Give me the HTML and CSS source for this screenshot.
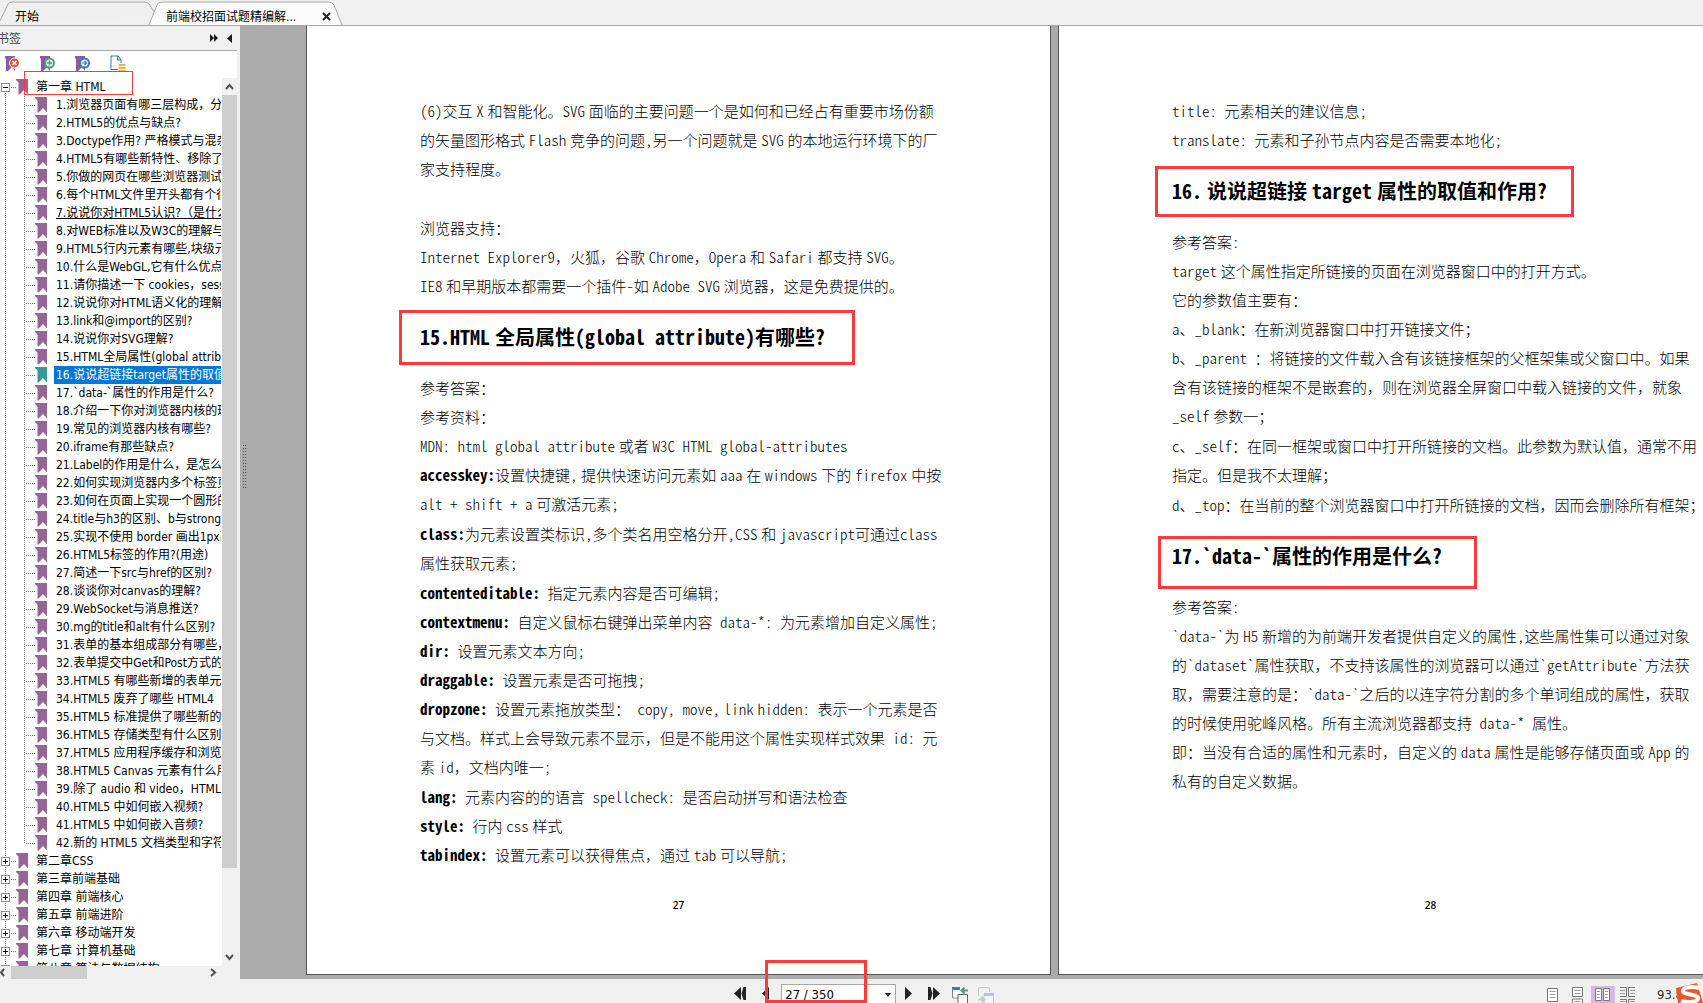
FILE: index.html
```html
<!DOCTYPE html>
<html lang="zh-CN">
<head>
<meta charset="utf-8">
<title>前端校招面试题精编解析</title>
<link rel="stylesheet" href="styles.css">
</head>
<body>
<svg class="defs" aria-hidden="true">
  <symbol id="flag" viewBox="0 0 12 16"><path d="M0 0h12v15.500l-4-4.500-4.500 4.500h-1V3.500L0 1z"/></symbol>
  <symbol id="ribbon" viewBox="0 0 16 17"><path d="M0 1h10v15l-3-4-4 4H1V4L0 3z" fill="#8a5aa8"/></symbol>
</svg>
<div class="app">
  <header class="tabs">
    <button class="tab tab-start">
      <svg class="tab-shape" viewBox="0 0 156 24"><path d="M-2 24 8 3q1-2 4-2h132q3 0 5 2l8 12" fill="#efefef" stroke="#a6a6a6"/></svg>
      <span>开始</span>
    </button>
    <button class="tab tab-file">
      <svg class="tab-shape" viewBox="0 0 194 24"><path d="M0 24 8 4q1-3 5-3h167q3 0 5 3l8 20" fill="#fcfcfc" stroke="#a6a6a6"/></svg>
      <span>前端校招面试题精编解...</span>
      <svg class="close" viewBox="0 0 9 9"><path d="M1 1l7 7M8 1 1 8" stroke="#222" stroke-width="2"/></svg>
    </button>
  </header>

  <div class="main">
    <aside class="panel">
      <div class="panel-head">
        <span>书签</span>
        <svg width="24" height="10" viewBox="0 0 24 10"><path d="M0 0l4 4-4 4zM4 0l4 4-4 4zM22 0v9l-5-4.500z" fill="#1c1c1c"/></svg>
      </div>
      <div class="tools">
        <button aria-label="删除书签"><svg viewBox="0 0 16 17"><use href="#ribbon"/><circle cx="9.500" cy="8" r="5" fill="#d9573a" stroke="#fff"/><path d="M7.500 6l4 4M11.500 6l-4 4" stroke="#fff" stroke-width="1.500"/></svg></button>
        <button aria-label="添加书签"><svg viewBox="0 0 16 17"><use href="#ribbon"/><circle cx="9.500" cy="8" r="4.500" fill="#e7f4ec" stroke="#579a7e" stroke-width="2"/><path d="M9.500 5.500v5M7 8h5" stroke="#579a7e" stroke-width="1.500"/></svg></button>
        <button aria-label="转到书签"><svg viewBox="0 0 16 17"><use href="#ribbon"/><circle cx="9.500" cy="8" r="4.500" fill="#e9f1fa" stroke="#4276ad" stroke-width="2"/><path d="M7 8h4.500M9.500 6l2 2-2 2" fill="none" stroke="#4276ad" stroke-width="1.200"/></svg></button>
        <button aria-label="书签选项"><svg viewBox="0 0 16 17"><path d="M8 14.500H1V1h7l3 4v3M7.500 1v4H11" fill="none" stroke="#4276ad"/><path d="M8.500 10h7M8.500 13h7M8.500 16h7" stroke="#eab04c" stroke-width="2"/></svg></button>
      </div>
      <div class="tree-wrap">
        <ul class="tree">
          <li><a class="chapter" href="#"><i class="fold open"></i><svg class="flag"><use href="#flag"/></svg><span>第一章 HTML</span></a>
            <ul class="items">
              <li><a href="#"><svg class="flag"><use href="#flag"/></svg><span>1.浏览器页面有哪三层构成，分别是什么</span></a></li>
              <li><a href="#"><svg class="flag"><use href="#flag"/></svg><span>2.HTML5的优点与缺点?</span></a></li>
              <li><a href="#"><svg class="flag"><use href="#flag"/></svg><span>3.Doctype作用? 严格模式与混杂模式</span></a></li>
              <li><a href="#"><svg class="flag"><use href="#flag"/></svg><span>4.HTML5有哪些新特性、移除了哪些</span></a></li>
              <li><a href="#"><svg class="flag"><use href="#flag"/></svg><span>5.你做的网页在哪些浏览器测试过</span></a></li>
              <li><a href="#"><svg class="flag"><use href="#flag"/></svg><span>6.每个HTML文件里开头都有个很重要</span></a></li>
              <li><a href="#"><svg class="flag"><use href="#flag"/></svg><span class="visited">7.说说你对HTML5认识?（是什么</span></a></li>
              <li><a href="#"><svg class="flag"><use href="#flag"/></svg><span>8.对WEB标准以及W3C的理解与认识</span></a></li>
              <li><a href="#"><svg class="flag"><use href="#flag"/></svg><span>9.HTML5行内元素有哪些,块级元素</span></a></li>
              <li><a href="#"><svg class="flag"><use href="#flag"/></svg><span>10.什么是WebGL,它有什么优点?</span></a></li>
              <li><a href="#"><svg class="flag"><use href="#flag"/></svg><span>11.请你描述一下 cookies，sessionStorage</span></a></li>
              <li><a href="#"><svg class="flag"><use href="#flag"/></svg><span>12.说说你对HTML语义化的理解?</span></a></li>
              <li><a href="#"><svg class="flag"><use href="#flag"/></svg><span>13.link和@import的区别?</span></a></li>
              <li><a href="#"><svg class="flag"><use href="#flag"/></svg><span>14.说说你对SVG理解?</span></a></li>
              <li><a href="#"><svg class="flag"><use href="#flag"/></svg><span>15.HTML全局属性(global attribute)</span></a></li>
              <li><a class="current" href="#"><svg class="flag"><use href="#flag"/></svg><span>16.说说超链接target属性的取值和作用</span></a></li>
              <li><a href="#"><svg class="flag"><use href="#flag"/></svg><span>17.`data-`属性的作用是什么?</span></a></li>
              <li><a href="#"><svg class="flag"><use href="#flag"/></svg><span>18.介绍一下你对浏览器内核的理解</span></a></li>
              <li><a href="#"><svg class="flag"><use href="#flag"/></svg><span>19.常见的浏览器内核有哪些?</span></a></li>
              <li><a href="#"><svg class="flag"><use href="#flag"/></svg><span>20.iframe有那些缺点?</span></a></li>
              <li><a href="#"><svg class="flag"><use href="#flag"/></svg><span>21.Label的作用是什么，是怎么用的</span></a></li>
              <li><a href="#"><svg class="flag"><use href="#flag"/></svg><span>22.如何实现浏览器内多个标签页</span></a></li>
              <li><a href="#"><svg class="flag"><use href="#flag"/></svg><span>23.如何在页面上实现一个圆形的</span></a></li>
              <li><a href="#"><svg class="flag"><use href="#flag"/></svg><span>24.title与h3的区别、b与strong的区别</span></a></li>
              <li><a href="#"><svg class="flag"><use href="#flag"/></svg><span>25.实现不使用 border 画出1px高的线</span></a></li>
              <li><a href="#"><svg class="flag"><use href="#flag"/></svg><span>26.HTML5标签的作用?(用途)</span></a></li>
              <li><a href="#"><svg class="flag"><use href="#flag"/></svg><span>27.简述一下src与href的区别?</span></a></li>
              <li><a href="#"><svg class="flag"><use href="#flag"/></svg><span>28.谈谈你对canvas的理解?</span></a></li>
              <li><a href="#"><svg class="flag"><use href="#flag"/></svg><span>29.WebSocket与消息推送?</span></a></li>
              <li><a href="#"><svg class="flag"><use href="#flag"/></svg><span>30.mg的title和alt有什么区别?</span></a></li>
              <li><a href="#"><svg class="flag"><use href="#flag"/></svg><span>31.表单的基本组成部分有哪些，</span></a></li>
              <li><a href="#"><svg class="flag"><use href="#flag"/></svg><span>32.表单提交中Get和Post方式的区别</span></a></li>
              <li><a href="#"><svg class="flag"><use href="#flag"/></svg><span>33.HTML5 有哪些新增的表单元素</span></a></li>
              <li><a href="#"><svg class="flag"><use href="#flag"/></svg><span>34.HTML5 废弃了哪些 HTML4</span></a></li>
              <li><a href="#"><svg class="flag"><use href="#flag"/></svg><span>35.HTML5 标准提供了哪些新的</span></a></li>
              <li><a href="#"><svg class="flag"><use href="#flag"/></svg><span>36.HTML5 存储类型有什么区别?</span></a></li>
              <li><a href="#"><svg class="flag"><use href="#flag"/></svg><span>37.HTML5 应用程序缓存和浏览器</span></a></li>
              <li><a href="#"><svg class="flag"><use href="#flag"/></svg><span>38.HTML5 Canvas 元素有什么用</span></a></li>
              <li><a href="#"><svg class="flag"><use href="#flag"/></svg><span>39.除了 audio 和 video，HTML5</span></a></li>
              <li><a href="#"><svg class="flag"><use href="#flag"/></svg><span>40.HTML5 中如何嵌入视频?</span></a></li>
              <li><a href="#"><svg class="flag"><use href="#flag"/></svg><span>41.HTML5 中如何嵌入音频?</span></a></li>
              <li><a href="#"><svg class="flag"><use href="#flag"/></svg><span>42.新的 HTML5 文档类型和字符集</span></a></li>
            </ul>
          </li>
          <li><a class="chapter" href="#"><i class="fold"></i><svg class="flag"><use href="#flag"/></svg><span>第二章CSS</span></a></li>
          <li><a class="chapter" href="#"><i class="fold"></i><svg class="flag"><use href="#flag"/></svg><span>第三章前端基础</span></a></li>
          <li><a class="chapter" href="#"><i class="fold"></i><svg class="flag"><use href="#flag"/></svg><span>第四章 前端核心</span></a></li>
          <li><a class="chapter" href="#"><i class="fold"></i><svg class="flag"><use href="#flag"/></svg><span>第五章 前端进阶</span></a></li>
          <li><a class="chapter" href="#"><i class="fold"></i><svg class="flag"><use href="#flag"/></svg><span>第六章 移动端开发</span></a></li>
          <li><a class="chapter" href="#"><i class="fold"></i><svg class="flag"><use href="#flag"/></svg><span>第七章 计算机基础</span></a></li>
          <li><a class="chapter" href="#"><i class="fold"></i><svg class="flag"><use href="#flag"/></svg><span>第八章 算法与数据结构</span></a></li>
        </ul>
        <div class="vbar">
          <svg viewBox="0 0 15 17"><path d="M4 11l3.500-4L11 11" fill="none" stroke="#505050" stroke-width="2"/></svg>
          <div class="vthumb"></div>
          <svg viewBox="0 0 15 17"><path d="M4 6l3.500 4L11 6" fill="none" stroke="#505050" stroke-width="2"/></svg>
        </div>
        <span class="mark mark-chapter"></span>
      </div>
      <div class="hbar">
        <svg viewBox="0 0 11 13"><path d="M4 3 1 6.500 4 10" fill="none" stroke="#505050" stroke-width="2"/></svg>
        <div class="hthumb"></div>
        <svg viewBox="0 0 11 13"><path d="M4 3l4 3.500L4 10" fill="none" stroke="#505050" stroke-width="2"/></svg>
      </div>
    </aside>

    <main class="viewer">
      <div class="splitter"><i class="grip"></i></div>
      <article class="sheet">
        <p class="long">(6)交互&emsp14;X&emsp14;和智能化。SVG&emsp14;面临的主要问题一个是如何和已经占有重要市场份额<br>的矢量图形格式&emsp14;Flash&emsp14;竞争的问题,另一个问题就是&emsp14;SVG&emsp14;的本地运行环境下的厂<br>家支持程度。</p>
        <p><br></p>
        <p>浏览器支持：</p>
        <p>Internet Explorer9<i>，</i>火狐<i>，</i>谷歌&emsp14;Chrome<i>，</i>Opera&emsp14;和&emsp14;Safari&emsp14;都支持&emsp14;SVG。</p>
        <p>IE8&emsp14;和早期版本都需要一个插件-如&emsp14;Adobe SVG&emsp14;浏览器<i>，</i>这是免费提供的。</p>
        <h2>15.HTML&emsp14;全局属性(global attribute)有哪些?<span class="mark mark-15"></span></h2>
        <p>参考答案：</p>
        <p>参考资料：</p>
        <p>MDN: html global attribute&emsp14;或者&emsp14;W3C HTML global-attributes</p>
        <p class="long"><b>accesskey:</b>设置快捷键,&emsp14;提供快速访问元素如&emsp14;aaa&emsp14;在&emsp14;windows&emsp14;下的&emsp14;firefox&emsp14;中按<br>alt + shift + a&emsp14;可激活元素;</p>
        <p class="long"><b>class:</b>为元素设置类标识,多个类名用空格分开,CSS&emsp14;和&emsp14;javascript可通过class<br>属性获取元素;</p>
        <p><b>contenteditable:</b> 指定元素内容是否可编辑;</p>
        <p><b>contextmenu:</b> 自定义鼠标右键弹出菜单内容 data-*: 为元素增加自定义属性;</p>
        <p><b>dir:</b> 设置元素文本方向;</p>
        <p><b>draggable:</b> 设置元素是否可拖拽;</p>
        <p class="long"><b>dropzone:</b> 设置元素拖放类型： copy, move,&emsp14;link&emsp14;hidden: 表示一个元素是否<br>与文档。样式上会导致元素不显示<i>，</i>但是不能用这个属性实现样式效果 id: 元<br>素&emsp14;id<i>，</i>文档内唯一;</p>
        <p><b>lang:</b> 元素内容的的语言 spellcheck: 是否启动拼写和语法检查</p>
        <p><b>style:</b> 行内&emsp14;css&emsp14;样式</p>
        <p><b>tabindex:</b> 设置元素可以获得焦点<i>，</i>通过&emsp14;tab&emsp14;可以导航;</p>
        <footer>27</footer>
      </article>
      <article class="sheet">
        <p>title: 元素相关的建议信息;</p>
        <p>translate: 元素和子孙节点内容是否需要本地化;</p>
        <h2>16.&emsp14;说说超链接&emsp14;target&emsp14;属性的取值和作用?<span class="mark mark-16"></span></h2>
        <p>参考答案:</p>
        <p>target&emsp14;这个属性指定所链接的页面在浏览器窗口中的打开方式。</p>
        <p>它的参数值主要有：</p>
        <p>a、_blank：在新浏览器窗口中打开链接文件；</p>
        <p class="long">b、_parent ：将链接的文件载入含有该链接框架的父框架集或父窗口中。如果<br>含有该链接的框架不是嵌套的<i>，</i>则在浏览器全屏窗口中载入链接的文件<i>，</i>就象<br>_self&emsp14;参数一；</p>
        <p class="long">c、_self：在同一框架或窗口中打开所链接的文档。此参数为默认值<i>，</i>通常不用<br>指定。但是我不太理解；</p>
        <p>d、_top：在当前的整个浏览器窗口中打开所链接的文档<i>，</i>因而会删除所有框架；</p>
        <h2>17.`data-`属性的作用是什么?<span class="mark mark-17"></span></h2>
        <p>参考答案:</p>
        <p>`data-`为&emsp14;H5&emsp14;新增的为前端开发者提供自定义的属性,这些属性集可以通过对象<br>的`dataset`属性获取<i>，</i>不支持该属性的浏览器可以通过`getAttribute`方法获<br>取<i>，</i>需要注意的是：`data-`之后的以连字符分割的多个单词组成的属性<i>，</i>获取<br>的时候使用驼峰风格。所有主流浏览器都支持 data-* 属性。</p>
        <p>即：当没有合适的属性和元素时<i>，</i>自定义的&emsp14;data&emsp14;属性是能够存储页面或&emsp14;App&emsp14;的<br>私有的自定义数据。</p>
        <footer>28</footer>
      </article>
    </main>
  </div>

  <footer class="status">
    <div class="pager">
      <button aria-label="首页"><svg width="13" height="13" viewBox="0 0 13 13"><path d="M7 0v13L0 6.500zM12 0v13h-2.500L7.500 6.500 9.500 0z" fill="#222"/></svg></button>
      <button aria-label="上一页"><svg width="8" height="13" viewBox="0 0 8 13"><path d="M7 0v13L0 6.500z" fill="#222"/></svg></button>
      <div class="page-box"><input type="text" value="27 / 350" aria-label="页码"><svg width="6" height="4" viewBox="0 0 6 4"><path d="M0 0h6L3 4z" fill="#222"/></svg><span class="mark mark-page"></span></div>
      <button aria-label="下一页"><svg width="8" height="13" viewBox="0 0 8 13"><path d="M0 0v13l7-6.500z" fill="#222"/></svg></button>
      <button aria-label="末页"><svg width="13" height="13" viewBox="0 0 13 13"><path d="M5 0v13l7-6.500zM0 0v13h2.500L4.500 6.500 2.500 0z" fill="#222"/></svg></button>
      <div class="history">
        <button aria-label="上一视图"><svg width="17" height="17" viewBox="0 0 17 17"><path d="M6 11H.500V.500H8" fill="#fff" stroke="#888"/><path d="M0 1.500h8" stroke="#4276ad" stroke-width="3"/><path d="M6 7.500h9.500v9H6z" fill="#fff" stroke="#666"/><path d="M16 3.500h-6M12.500.500l-3 3 3 3" fill="none" stroke="#579a7e" stroke-width="2"/></svg></button>
        <button aria-label="下一视图"><svg width="17" height="17" viewBox="0 0 17 17"><path d="M.500 9V.500h11V5" fill="none" stroke="#c8c8c8"/><path d="M6 7.500h9.500v9H6z" fill="#f6f6f6" stroke="#c4c4c4"/><path d="M6 7.500h10" stroke="#b0c4dc" stroke-width="3"/><path d="M0 12.500h6M3.500 10l3 2.500-3 2.500" fill="none" stroke="#b3d3c4" stroke-width="2"/></svg></button>
      </div>
    </div>
    <div class="views">
      <button aria-label="单页"><svg width="16" height="17" viewBox="0 0 16 17"><path d="M2.500 2.500h10v13h-10z" fill="#fff" stroke="#777"/><path d="M4.500 5.500h6M4.500 8.500h6M4.500 11.500h6" stroke="#999"/></svg></button>
      <button aria-label="连续"><svg width="16" height="17" viewBox="0 0 16 17"><path d="M2.500 1.500h10v9h-10zM2.500 18v-5h10v5" fill="#fff" stroke="#777"/><path d="M4.500 4.500h6M4.500 7.500h6M4.500 15.500h6" stroke="#999"/></svg></button>
      <button class="on" aria-label="双页"><svg width="16" height="17" viewBox="0 0 16 17"><path d="M.500 2.500h6v12h-6zM8.500 2.500h6v12h-6z" fill="#fff" stroke="#777"/><path d="M2 5.500h3M2 8.500h3M2 11.500h3M10 5.500h3M10 8.500h3M10 11.500h3" stroke="#999"/></svg></button>
      <button aria-label="双页连续"><svg width="16" height="17" viewBox="0 0 16 17"><path d="M0 1.500h6.500v9H0M15 1.500H8.500v9H15M0 13.500h6.500V18M15 13.500H8.500V18" fill="none" stroke="#777"/><path d="M0 4.500h5M0 7.500h5M10 4.500h5M10 7.500h5M0 15.500h5M10 15.500h5" stroke="#999"/></svg></button>
      <span class="zoom">93.8</span>
      <svg class="ime" viewBox="0 0 28 20"><path d="M1 5 22 0l6 20H3z" fill="#f0562a"/><path d="M24 5C18 3 8 4 8 8s15 3 15 7-9 5-17 3" fill="none" stroke="#fff" stroke-width="4"/></svg>
    </div>
  </footer>
</div>
</body>
</html>
```
FILE: styles.css
```css
* { box-sizing: border-box; }

body {
  margin: 0;
  background: #f0f0f0;
  color: #000;
  font: 12px/18px "DejaVu Sans Condensed", "Noto Sans CJK SC", sans-serif;
}

button {
  margin: 0;
  padding: 0;
  border: 0;
  background: none;
  color: inherit;
  font: inherit;
}

svg { display: block; flex: none; }
.defs { position: absolute; width: 0; height: 0; }
ul { margin: 0; padding: 0; list-style: none; }

.app {
  display: flex;
  flex-direction: column;
  height: 100vh;
  overflow: hidden;
}

/* Document tabs */
.tabs {
  display: flex;
  flex: none;
  height: 26px;
  padding-top: 1px;
  border-bottom: 1px solid #a6a6a6;
}

.tab {
  position: relative;
  display: flex;
  align-items: center;
  height: 24px;
  padding-top: 7px;
}

.tab-shape {
  position: absolute;
  top: 0;
  left: 0;
  height: 24px;
  overflow: visible;
}

.tab span { position: relative; }
.tab-start { width: 149px; padding-left: 15px; }
.tab-start .tab-shape { width: 156px; }
.tab-file { width: 194px; padding-left: 17px; }
.tab-file .tab-shape { width: 194px; }

.close {
  position: relative;
  width: 9px;
  height: 9px;
  margin-left: auto;
  margin-right: 12px;
}

.main {
  display: flex;
  flex: 1;
  min-height: 0;
}

/* Bookmark panel */
.panel {
  display: flex;
  flex-direction: column;
  flex: none;
  width: 240px;
  padding-right: 3px;
  background: linear-gradient(#f0f0f0, #f0f0f0) right / 3px 100% no-repeat #fff;
}

.panel-head {
  display: flex;
  flex: none;
  align-items: center;
  justify-content: space-between;
  height: 25px;
  padding: 1px 3px 0 0;
  border-bottom: 1px solid #a6a6a6;
  background: #f0f0f0;
  color: #444;
}

.panel-head span { margin-left: -3px; }

.tools {
  display: flex;
  flex: none;
  align-items: flex-start;
  gap: 19px;
  height: 27px;
  padding: 4px 0 0 5px;
}

.tools svg { width: 16px; height: 17px; }

.tree-wrap {
  position: relative;
  display: flex;
  flex: 1;
  min-height: 0;
}

.tree {
  flex: 1;
  min-width: 0;
  overflow: hidden;
  background: repeating-linear-gradient(#777 0 1px, transparent 1px 2px) 5px 9px / 1px 100% no-repeat;
}

.tree a {
  display: flex;
  height: 18px;
  color: #000;
  text-decoration: none;
  white-space: nowrap;
}

.tree span { line-height: 19px; }

.items { background: repeating-linear-gradient(#777 0 1px, transparent 1px 2px) 24px 0 / 1px 747px no-repeat; }

.items a {
  padding-left: 35px;
  background: repeating-linear-gradient(90deg, #777 0 1px, transparent 1px 2px) 26px 9px / 9px 1px no-repeat;
}

.items span { margin-left: 7px; padding-left: 2px; }

.flag {
  width: 12px;
  height: 16px;
  margin-top: 1px;
  fill: #966496;
}

.current .flag { fill: #339999; }
.items .current span { flex: 1; background: #0078d7; color: #fff; }
.visited { text-decoration: underline; }

.chapter {
  padding-left: 1px;
  background: repeating-linear-gradient(90deg, #777 0 1px, transparent 1px 2px) 11px 9px / 6px 1px no-repeat;
}

.chapter span { margin-left: 8px; }

.fold {
  width: 9px;
  height: 9px;
  margin: 5px 6px 0 0;
  border: 1px solid #919191;
  background:
    linear-gradient(#000, #000) center / 5px 1px no-repeat,
    linear-gradient(#000, #000) center / 1px 5px no-repeat,
    #fff;
}

.fold.open { background: linear-gradient(#000, #000) center / 5px 1px no-repeat, #fff; }

.vbar {
  display: flex;
  flex-direction: column;
  flex: none;
  width: 15px;
  margin-left: 1px;
  background: #f0f0f0;
}

.vbar svg { width: 15px; height: 17px; }
.vthumb { height: 87%; margin-bottom: auto; background: #cdcdcd; }

.hbar {
  display: flex;
  flex: none;
  height: 13px;
  padding-right: 19px;
  background: #f0f0f0;
}

.hbar svg { width: 11px; height: 13px; }
.hthumb { width: 76px; margin-right: auto; background: #cdcdcd; }

/* Page view */
.viewer {
  display: flex;
  flex: 1;
  gap: 7px;
  min-width: 0;
  overflow: hidden;
  padding-bottom: 4px;
  background: #ababab;
}

.splitter { flex: none; width: 59px; }

.grip {
  display: block;
  width: 3px;
  height: 46px;
  margin: 417px 0 0 3px;
  background: repeating-linear-gradient(#ababab 0 2px, transparent 2px 3px), repeating-linear-gradient(90deg, #555 0 1px, #ababab 1px 2px);
}

.sheet {
  display: flex;
  flex-direction: column;
  flex: none;
  width: 745px;
  padding: 70px 0 61px 113px;
  border: solid #555;
  border-width: 0 1px 1px;
  background: #fff;
  color: #000;
  font: 300 15px/29px "Noto Sans CJK SC", sans-serif;
  font-feature-settings: "hwid", "liga" 0;
  white-space: nowrap;
}

.sheet p { margin: 0; }
.sheet .long { margin-bottom: 1px; }
.sheet b { font-weight: 700; }

/* Full-width comma: keeps its em width next to the half-width Latin */
.sheet p i { font-style: normal; font-feature-settings: normal; }

.sheet h2 {
  position: relative;
  margin: 0;
  padding-top: 1px;
  font-size: 20px;
  font-weight: 700;
  line-height: 72px;
}

.sheet footer {
  margin: auto 113px 0 0;
  font: 600 10px/16px "Open Sans", sans-serif;
  text-align: center;
}

/* Red review marks */
.mark {
  position: absolute;
  border: 3px solid #fb3b3b;
  pointer-events: none;
}

.mark-chapter { top: -7px; left: 24px; width: 109px; height: 24px; border-width: 1px; }
.mark-15 { top: 10px; left: -21px; width: 456px; height: 55px; }
.mark-16 { top: 12px; left: -17px; width: 419px; height: 51px; }
.mark-17 { top: 17px; left: -14px; width: 319px; height: 53px; }
.mark-page { top: -25px; left: -17px; width: 102px; height: 43px; }

/* Status bar */
.status {
  display: flex;
  flex: none;
  justify-content: space-between;
  height: 24px;
  padding-left: 43%;
}

.pager {
  display: flex;
  align-items: flex-start;
  gap: 15px;
  padding: 8px 0 0 2px;
}

.history { display: flex; gap: 9px; margin-left: -4px; }

.page-box {
  position: relative;
  display: flex;
  width: 115px;
  height: 24px;
  margin: -3px -6px 0 -4px;
  border: 1px solid #a6a6a6;
  background: #fff;
}

.page-box input {
  flex: 1;
  min-width: 0;
  height: 19px;
  padding: 0 0 0 3px;
  border: 0;
  background: none;
  font: 13px/19px "DejaVu Sans Condensed", sans-serif;
  outline: 0;
}

.page-box svg { margin: 8px 4px 0 0; }

.views {
  display: flex;
  align-items: flex-start;
  padding-top: 7px;
}

.views button { height: 17px; padding: 0 4px; margin-right: 1px; }
.views .on { background: #d5b8e8; }
.zoom { margin-left: 16px; font-size: 13px; color: #333; }
.ime { width: 28px; height: 20px; margin: -3px 0 0 -8px; }
```
